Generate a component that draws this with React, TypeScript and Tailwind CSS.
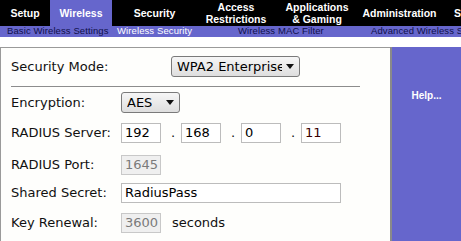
const tabs = [
  { label: ['Setup'], w: 'w-[50px]' },
  { label: ['Wireless'], w: 'w-[62px]', active: true },
  { label: ['Security'], w: 'w-[85px]' },
  { label: ['Access', 'Restrictions'], w: 'w-[78px]' },
  { label: ['Applications', '& Gaming'], w: 'w-[84px]' },
  { label: ['Administration'], w: 'w-[81px]' },
  { label: ['Status'], w: 'w-[60px]' },
];

const subTabs = [
  { label: 'Basic Wireless Settings', w: 'w-[117px] pl-[7px]' },
  { label: 'Wireless Security', w: 'w-[121px]', active: true },
  { label: 'Wireless MAC Filter', w: 'w-[133px]' },
  { label: 'Advanced Wireless Settings', w: 'w-[140px]' },
];

function Select({ value, width }: { value: string; width: string }) {
  return (
    <div
      className={`${width} h-[21px] flex items-center justify-between pl-[5px] pr-[5px] rounded-[3px] border border-[#7a7a7a] bg-gradient-to-b from-[#f6f6f6] to-[#dedede] text-black`}
    >
      <span className="whitespace-nowrap overflow-hidden">{value}</span>
      <svg width="8" height="5" viewBox="0 0 8 5" className="shrink-0 ml-1">
        <path d="M0 0h8L4 5z" fill="#111" />
      </svg>
    </div>
  );
}

function Box({ value, width = 'w-[40px]', disabled, color = 'text-black' }: { value: string; width?: string; disabled?: boolean; color?: string }) {
  return (
    <div
      className={`${width} h-[20px] flex items-center pl-[3px] border ${
        disabled ? 'border-[#c8c8c8] bg-[#efefef] text-[#7a7a7a]' : `border-[#bcbcbc] bg-white ${color}`
      }`}
    >
      {value}
    </div>
  );
}

function Dot() {
  return <span className="w-[20px] pl-[4px] text-center">.</span>;
}

export default function App() {
  return (
    <div className="w-[461px] h-[241px] overflow-hidden bg-white font-['DejaVu_Sans',sans-serif]">
      <div className="h-[26px] bg-black flex font-['Liberation_Sans',Arial,sans-serif] font-bold text-[10.5px] leading-[12px] text-white">
        {tabs.map((t) => (
          <div
            key={t.label[0]}
            className={`${t.w} shrink-0 flex flex-col items-center justify-center whitespace-nowrap ${t.active ? 'bg-[#6666cc]' : ''}`}
          >
            {t.label.map((l) => (
              <span key={l}>{l}</span>
            ))}
          </div>
        ))}
      </div>
      <div className="h-[11px] bg-[#6666cc] flex items-center font-['Liberation_Sans',Arial,sans-serif] text-[9.5px] tracking-[0.1px]">
        {subTabs.map((s) => (
          <div key={s.label} className={`${s.w} shrink-0 whitespace-nowrap ${s.active ? 'text-white' : 'text-[#10104a]'}`}>
            {s.label}
          </div>
        ))}
      </div>
      <div className="h-[10px]" />
      <div className="flex h-[194px]">
        <div className="w-[390px] border-t border-l border-[#9a9a9a] bg-[#fefefc] pl-[10px] pt-[8px] text-[13px] text-[#111]">
          <div className="flex items-center">
            <span className="w-[160px]">Security Mode:</span>
            <Select value="WPA2 Enterprise" width="w-[129px]" />
          </div>
          <div className="mt-[9px] h-px w-[349px] bg-[#8c8c8c]" />
          <div className="mt-[5px] flex items-center">
            <span className="w-[110px]">Encryption:</span>
            <Select value="AES" width="w-[59px]" />
          </div>
          <div className="mt-[10px] flex items-center">
            <span className="w-[110px]">RADIUS Server:</span>
            <Box value="192" />
            <Dot />
            <Box value="168" />
            <Dot />
            <Box value="0" />
            <Dot />
            <Box value="11" color="text-[#3a0000]" />
          </div>
          <div className="mt-[12px] flex items-center">
            <span className="w-[110px]">RADIUS Port:</span>
            <Box value="1645" disabled />
          </div>
          <div className="mt-[8px] flex items-center">
            <span className="w-[110px]">Shared Secret:</span>
            <Box value="RadiusPass" width="w-[220px]" />
          </div>
          <div className="mt-[10px] flex items-center">
            <span className="w-[110px]">Key Renewal:</span>
            <Box value="3600" disabled />
            <span className="ml-[11px]">seconds</span>
          </div>
        </div>
        <div className="flex-1 border-l-2 border-[#8a8a8a] bg-[#6666cc] pt-[41px] text-center font-['Liberation_Sans',Arial,sans-serif] font-bold text-[10px] text-white">
          Help...
        </div>
      </div>
    </div>
  );
}
